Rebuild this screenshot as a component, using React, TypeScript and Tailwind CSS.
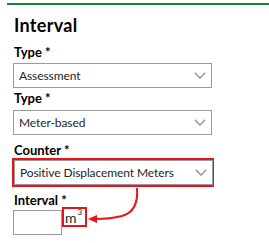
import React from "react";

function Chevron() {
  return (
    <svg width="12" height="7" viewBox="0 0 12 7" className="shrink-0">
      <path d="M0.8 0.8l5.2 5.2 5.2-5.2" fill="none" stroke="#9a9a9a" strokeWidth="1.6" />
    </svg>
  );
}

function Select({ value, className = "" }: { value: string; className?: string }) {
  return (
    <div
      className={`flex items-center justify-between w-[199px] h-[25px] border border-[#9b9b9b] bg-white pl-[5px] pr-[5px] text-[12px] tracking-[-0.1px] text-[#262626] ${className}`}
    >
      <span className="whitespace-nowrap">{value}</span>
      <Chevron />
    </div>
  );
}

function Label({ children, className = "" }: { children: React.ReactNode; className?: string }) {
  return (
    <div className={`ml-[1px] h-[15px] text-[13px] font-bold text-black leading-[15px] ${className}`}>
      {children}
    </div>
  );
}

export default function App() {
  return (
    <div
      className="relative w-[269px] h-[243px] bg-white overflow-hidden"
      style={{ fontFamily: 'Lato, "Noto Sans", sans-serif' }}
    >
      <div className="ml-[7px] mt-[3px] h-[2px] bg-[#1a7f3c]" />
      <div className="pl-[13px]">
        <h2 className="mt-[10px] ml-[1px] h-[20px] text-[18px] font-bold leading-[20px] tracking-[0.3px] text-black">
          Interval
        </h2>
        <Label className="mt-[10px]">Type *</Label>
        <Select value="Assessment" className="mt-[3px]" />
        <Label className="mt-[3px]">Type *</Label>
        <Select value="Meter-based" className="mt-[4px]" />
        <Label className="mt-[8px]">Counter *</Label>
        <div className="-ml-[1px] w-[202px] border-2 border-[#e8141b]">
          <Select value="Positive Displacement Meters" />
        </div>
        <Label className="mt-[6px]">Interval *</Label>
        <div className="mt-[2px] flex items-start">
          <div className="w-[49px] h-[25px] border border-[#9b9b9b] bg-white" />
          <div className="-mt-[3px] flex items-center h-[20px] w-[25px] border-2 border-[#e8141b] pl-[1px] text-[14px] text-[#262626]">
            m<sup className="text-[8px] -top-[5px] ml-[1px]">3</sup>
          </div>
        </div>
      </div>
      <svg className="absolute left-0 top-0" width="269" height="243" viewBox="0 0 269 243">
        <path
          d="M137 188 C138 200 136 212 122 216 C114 218 106 219 96 219"
          fill="none"
          stroke="#e8141b"
          strokeWidth="2"
        />
        <path d="M88 219 L97 215 L97 223 Z" fill="#e8141b" />
      </svg>
    </div>
  );
}
